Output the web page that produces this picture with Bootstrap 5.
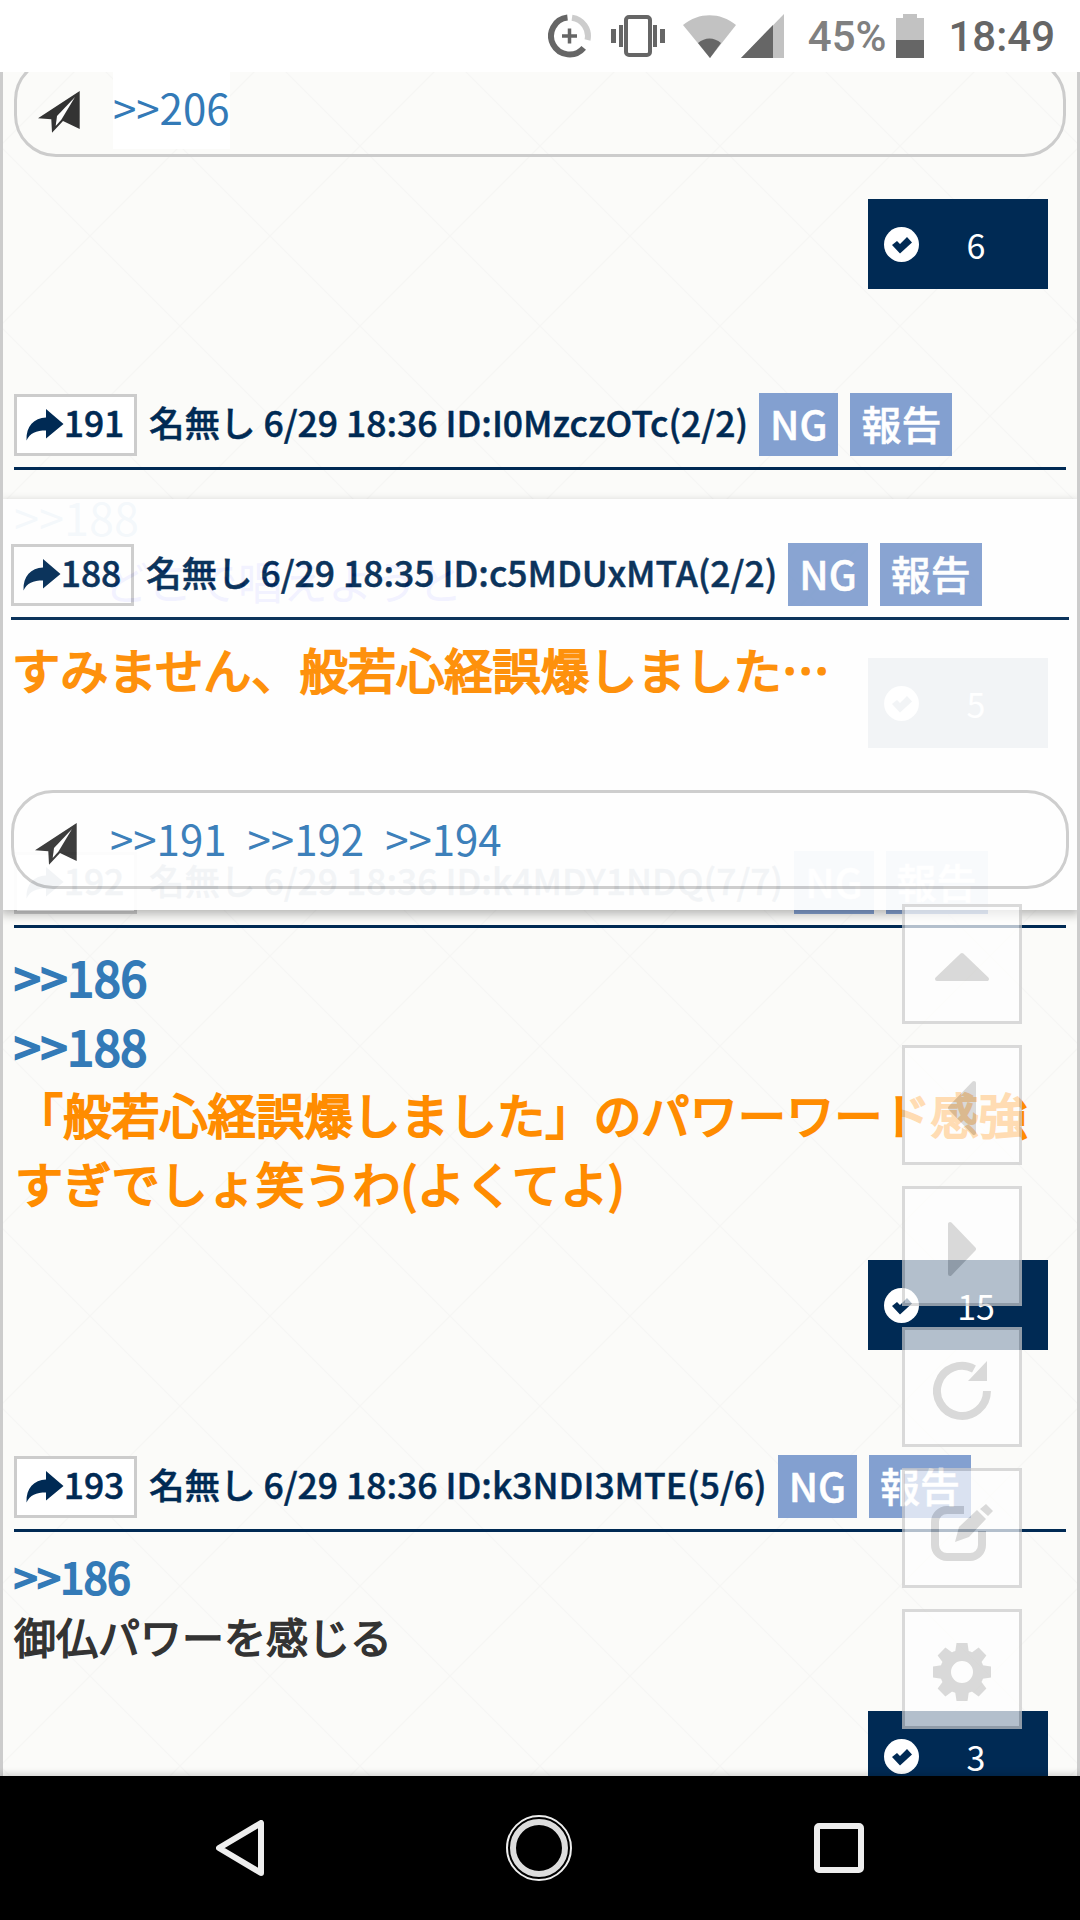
<!DOCTYPE html>
<html lang="ja">
  <head>
    <meta charset="utf-8" />
    <title>スレッド</title>
    <link href="https://cdn.jsdelivr.net/npm/bootstrap@5.3.3/dist/css/bootstrap.min.css" rel="stylesheet" />
    <style>
      body { width: 1080px; height: 1920px; overflow: hidden; background: #000; font-family: "Noto Sans CJK JP", "Liberation Sans", sans-serif; }

      .status-strip { height: 72px; background: #fff; padding-right: 25px; font-family: Roboto, "Liberation Sans", sans-serif; font-size: 42px; font-weight: 500; }
      .status-pct { color: #808080; margin: 0 10px 0 24px; }
      .status-time { color: #666; margin-left: 24px; }
      .saver-icon { margin-right: 20px; }
      .shake-icon { margin-right: 18px; }
      .wifi-icon { margin-right: 5px; }

      .thread-view {
        position: relative; height: 1704px; overflow: hidden;
        border-left: 3px solid #ccc; border-right: 3px solid #ccc;
        background-color: #fbfbf9;
        background-image:
          linear-gradient(45deg, transparent calc(50% - 1px), #f6f6f4 50%, transparent calc(50% + 1px)),
          linear-gradient(-45deg, transparent calc(50% - 1px), #f6f6f4 50%, transparent calc(50% + 1px));
        background-size: 180px 180px;
        background-position: -3px 74px;
      }
      .thread-flow { padding: 0 11px; margin-top: -14px; }

      .reply-pill { height: 99px; border: 3px solid #ccc; border-radius: 42px; padding-left: 21px; }
      .reply-link { display: block; height: 82px; line-height: 79px; font-size: 42px; color: #337ab7; background: #fff; text-decoration: none; }
      .plane-icon { width: 42px; height: 42px; margin-right: 33px; margin-top: 9px; }

      .vote-tag { width: 180px; height: 90px; margin-left: auto; margin-right: 18px; padding-left: 16px; background: #002a54; color: #fff; font-size: 34px; }
      .vote-tag svg { width: 35px; height: 35px; }
      .vote-num { width: 60px; margin-left: 27px; text-align: center; }

      .res-head { height: 63px; color: #002a54; font-size: 35.5px; font-weight: 500; line-height: 1; white-space: nowrap; -webkit-text-stroke: .5px currentColor; }
      .res-rule { height: 3px; margin-top: 11px; background: #002a54; }
      .res-anchor { width: 123px; height: 62px; padding-bottom: 6px; border: 3px solid #ccc; background: #fff; }
      .res-anchor svg { width: 38px; height: 32px; margin: 6px 0 0 -1px; }
      .res-meta { margin: 0 11px 0 12px; padding-bottom: 5px; }
      .res-action { height: 63px; padding: 0 11px 4px; margin-right: 12px; background: #83a0d0; color: #fff; font-size: 40px; }

      .res-body { padding-top: 14px; padding-bottom: 4px; }
      .res-body.wide-top { padding-top: 15px; }
      .res-line { font-size: 45px; line-height: 64px; }
      .res-line.big { font-size: 48px; line-height: 68.5px; }
      .res-line.mid { font-size: 42px; line-height: 60px; }
      .ref-link { color: #337ab7; }
      .text-hot { color: #ff8c00; padding-left: 1px; letter-spacing: .2px; -webkit-text-stroke: 2.2px currentColor; }
      .text-plain { color: #333; -webkit-text-stroke: 1.5px currentColor; }
      .text-heavy { -webkit-text-stroke: 2.2px currentColor; }
      .text-blue { color: #0000ff; }

      .gap-top-a { margin-top: 42px; }
      .gap-top-b { margin-top: 41px; }
      .gap-top-b2 { margin-top: 40px; }
      .gap-top-c { margin-top: 103px; }
      .gap-top-d { margin-top: 104px; }
      .gap-top-e { margin-top: 105px; }

      .popup-res {
        position: absolute; left: -3px; right: -3px; top: 427px; height: 411px;
        padding: 44px 11px 0; background: #fff; opacity: .95;
        box-shadow: 0 4px 10px rgba(0, 0, 0, .3);
      }
      .popup-pill { margin-top: 83px; }
      .popup-pill .reply-link { margin-right: 21px; }

      .tool-rail { position: absolute; top: 832px; right: 55px; gap: 21px; }
      .tool-key { width: 120px; height: 120px; padding-top: 6px; border: 3px solid #ccc; background: #fff; opacity: .7; }
      .tool-key .pen-icon { margin-top: 4px; }

      .nav-strip { position: relative; height: 144px; background: #000; gap: 242px; box-shadow: 0 -3px 6px rgba(0, 0, 0, .14); }
    </style>
  </head>
  <body>
    <svg width="0" height="0" class="position-absolute">
      <symbol id="i-plane" viewBox="0 0 42 42">
        <path fill="#333" d="M0 27.3 41.7 0V38L25 30 14 41.7 13.3 28.3Z" />
        <path fill="#fff" d="M37 6 19 25 17.7 35 23.3 28.7Z" />
      </symbol>
      <symbol id="i-share" viewBox="0 0 38 32">
        <path fill="#002a54" d="M37.5 15 20 0V8.5C8 9 0 17 .5 31.5 4 24 10 21.500 20 21.500V29.500Z" />
      </symbol>
      <symbol id="i-check" viewBox="0 0 35 35">
        <circle cx="17.500" cy="17.500" r="17.500" fill="#fff" />
        <path fill="#002a54" d="M8 18 16 26.500 28 15.500 23 10 16 17 13 14Z" />
      </symbol>
    </svg>

    <div class="status-strip d-flex justify-content-end align-items-center">
      <svg width="43" height="44" viewBox="0 0 43 44" class="saver-icon">
        <path d="M35.700 33.900A18.500 18.500 0 1 1 19.500 3.600" fill="none" stroke="#666" stroke-width="6" />
        <path d="M24 3.700A18.500 18.500 0 0 1 39.500 26" fill="none" stroke="#ccc" stroke-width="6" />
        <path d="M14 22H29M21.500 14.500V29.500" stroke="#666" stroke-width="3.500" />
      </svg>
      <svg width="54" height="42" viewBox="0 0 54 42" class="shake-icon">
        <rect x="15" y="2" width="24" height="38" rx="3" fill="none" stroke="#666" stroke-width="4" />
        <path d="M0 14H5V28H0ZM8 10H12V32H8ZM42 10H46V32H42ZM49 14H54V28H49Z" fill="#666" />
      </svg>
      <svg width="53" height="43" viewBox="0 0 53 43" class="wifi-icon">
        <path d="M0 10C16-3 37-3 53 10L27 43Z" fill="#c2c2c2" />
        <path d="M15 28C22 22 31 22 38 28L27 43Z" fill="#666" />
      </svg>
      <svg width="43" height="44" viewBox="0 0 43 44">
        <path d="M43 0V44H0Z" fill="#c2c2c2" />
        <path d="M32 11V44H0Z" fill="#666" />
      </svg>
      <span class="status-pct">45%</span>
      <svg width="28" height="44" viewBox="0 0 28 44">
        <path d="M7 0H21V4H28V26H0V4H7Z" fill="#c2c2c2" />
        <rect y="26" width="28" height="18" fill="#666" />
      </svg>
      <span class="status-time">18:49</span>
    </div>

    <div class="thread-view">
      <div class="thread-flow">
        <div class="reply-pill d-flex align-items-center">
          <svg class="plane-icon"><use href="#i-plane" /></svg>
          <a class="reply-link" href="#">&gt;&gt;206</a>
        </div>
        <div class="vote-tag gap-top-a d-flex align-items-center">
          <svg><use href="#i-check" /></svg><span class="vote-num">6</span>
        </div>

        <div class="gap-top-d">
          <div class="res-head d-flex align-items-center">
            <div class="res-anchor d-flex align-items-center justify-content-center"><svg><use href="#i-share" /></svg>191</div>
            <span class="res-meta">名無し 6/29 18:36 ID:I0MzczOTc(2/2)</span>
            <div class="res-action d-flex align-items-center">NG</div>
            <div class="res-action d-flex align-items-center">報告</div>
          </div>
          <div class="res-rule"></div>
          <div class="res-body wide-top">
            <div class="res-line ref-link">&gt;&gt;188</div>
            <div class="res-line text-blue">　　どこで唱えようと</div>
          </div>
          <div class="vote-tag gap-top-b d-flex align-items-center">
            <svg><use href="#i-check" /></svg><span class="vote-num">5</span>
          </div>
        </div>

        <div class="gap-top-c">
          <div class="res-head d-flex align-items-center">
            <div class="res-anchor d-flex align-items-center justify-content-center"><svg><use href="#i-share" /></svg>192</div>
            <span class="res-meta">名無し 6/29 18:36 ID:k4MDY1NDQ(7/7)</span>
            <div class="res-action d-flex align-items-center">NG</div>
            <div class="res-action d-flex align-items-center">報告</div>
          </div>
          <div class="res-rule"></div>
          <div class="res-body">
            <div class="res-line big ref-link text-heavy">&gt;&gt;186</div>
            <div class="res-line big ref-link text-heavy">&gt;&gt;188</div>
            <div class="res-line big text-hot">「般若心経誤爆しました」のパワーワード感強すぎでしょ笑うわ(よくてよ)</div>
          </div>
          <div class="vote-tag gap-top-b2 d-flex align-items-center">
            <svg><use href="#i-check" /></svg><span class="vote-num">15</span>
          </div>
        </div>

        <div class="gap-top-e">
          <div class="res-head d-flex align-items-center">
            <div class="res-anchor d-flex align-items-center justify-content-center"><svg><use href="#i-share" /></svg>193</div>
            <span class="res-meta">名無し 6/29 18:36 ID:k3NDI3MTE(5/6)</span>
            <div class="res-action d-flex align-items-center">NG</div>
            <div class="res-action d-flex align-items-center">報告</div>
          </div>
          <div class="res-rule"></div>
          <div class="res-body">
            <div class="res-line mid ref-link text-heavy">&gt;&gt;186</div>
            <div class="res-line mid text-plain">御仏パワーを感じる</div>
          </div>
          <div class="vote-tag gap-top-b d-flex align-items-center">
            <svg><use href="#i-check" /></svg><span class="vote-num">3</span>
          </div>
        </div>
      </div>

      <div class="popup-res">
        <div class="res-head d-flex align-items-center">
          <div class="res-anchor d-flex align-items-center justify-content-center"><svg><use href="#i-share" /></svg>188</div>
          <span class="res-meta">名無し 6/29 18:35 ID:c5MDUxMTA(2/2)</span>
          <div class="res-action d-flex align-items-center">NG</div>
          <div class="res-action d-flex align-items-center">報告</div>
        </div>
        <div class="res-rule"></div>
        <div class="res-body">
          <div class="res-line big text-hot">すみません、般若心経誤爆しました…</div>
        </div>
        <div class="reply-pill popup-pill d-flex align-items-center">
          <svg class="plane-icon"><use href="#i-plane" /></svg>
          <a class="reply-link" href="#">&gt;&gt;191</a>
          <a class="reply-link" href="#">&gt;&gt;192</a>
          <a class="reply-link" href="#">&gt;&gt;194</a>
        </div>
      </div>

      <div class="tool-rail d-flex flex-column">
        <div class="tool-key d-flex align-items-center justify-content-center">
          <svg width="56" height="30" viewBox="0 0 56 30"><path d="M28 3 53 27H3Z" fill="#ccc" stroke="#ccc" stroke-width="4" stroke-linejoin="round" /></svg>
        </div>
        <div class="tool-key d-flex align-items-center justify-content-center">
          <svg width="30" height="56" viewBox="0 0 30 56"><path d="M27 3V53L3 28Z" fill="#ccc" stroke="#ccc" stroke-width="4" stroke-linejoin="round" /></svg>
        </div>
        <div class="tool-key d-flex align-items-center justify-content-center">
          <svg width="30" height="56" viewBox="0 0 30 56"><path d="M3 3V53L27 28Z" fill="#ccc" stroke="#ccc" stroke-width="4" stroke-linejoin="round" /></svg>
        </div>
        <div class="tool-key d-flex align-items-center justify-content-center">
          <svg width="58" height="59" viewBox="0 0 58 59">
            <path d="M54 30A25 25 0 1 1 41 8" fill="none" stroke="#ccc" stroke-width="8" />
            <path d="M54 0V20H35Z" fill="#ccc" />
          </svg>
        </div>
        <div class="tool-key d-flex align-items-center justify-content-center">
          <svg class="pen-icon" width="62" height="58" viewBox="0 0 62 58">
            <path d="M33 6H16A12 12 0 0 0 4 18V41A12 12 0 0 0 16 53H39A12 12 0 0 0 51 41V27" fill="none" stroke="#ccc" stroke-width="8" />
            <path d="M24 38 28 23 46 6 55 15 38 33ZM49 5 55 0 62 7 57 12Z" fill="#ccc" />
          </svg>
        </div>
        <div class="tool-key d-flex align-items-center justify-content-center">
          <svg width="58" height="58" viewBox="-29 -29 58 58">
            <circle r="16.500" fill="none" stroke="#ccc" stroke-width="11" />
            <g fill="#ccc">
              <path id="gear-tooth" d="M-5.500-29H5.500L7-19H-7Z" />
              <use href="#gear-tooth" transform="rotate(45)" />
              <use href="#gear-tooth" transform="rotate(90)" />
              <use href="#gear-tooth" transform="rotate(135)" />
              <use href="#gear-tooth" transform="rotate(180)" />
              <use href="#gear-tooth" transform="rotate(225)" />
              <use href="#gear-tooth" transform="rotate(270)" />
              <use href="#gear-tooth" transform="rotate(315)" />
            </g>
          </svg>
        </div>
      </div>
    </div>

    <div class="nav-strip d-flex justify-content-center align-items-center">
      <svg width="48" height="56" viewBox="0 0 48 56"><path d="M45 3V53L3 28Z" fill="none" stroke="#eee" stroke-width="6" stroke-linejoin="round" /></svg>
      <svg width="66" height="66" viewBox="0 0 66 66">
        <circle cx="33" cy="33" r="32" fill="none" stroke="#eee" stroke-width="2" />
        <circle cx="33" cy="33" r="26" fill="none" stroke="#ddd" stroke-width="6" />
      </svg>
      <svg width="50" height="50" viewBox="0 0 50 50"><rect x="3" y="3" width="44" height="44" rx="2" fill="none" stroke="#eee" stroke-width="6" /></svg>
    </div>

    <script src="https://cdn.jsdelivr.net/npm/bootstrap@5.3.3/dist/js/bootstrap.bundle.min.js"></script>
  </body>
</html>
